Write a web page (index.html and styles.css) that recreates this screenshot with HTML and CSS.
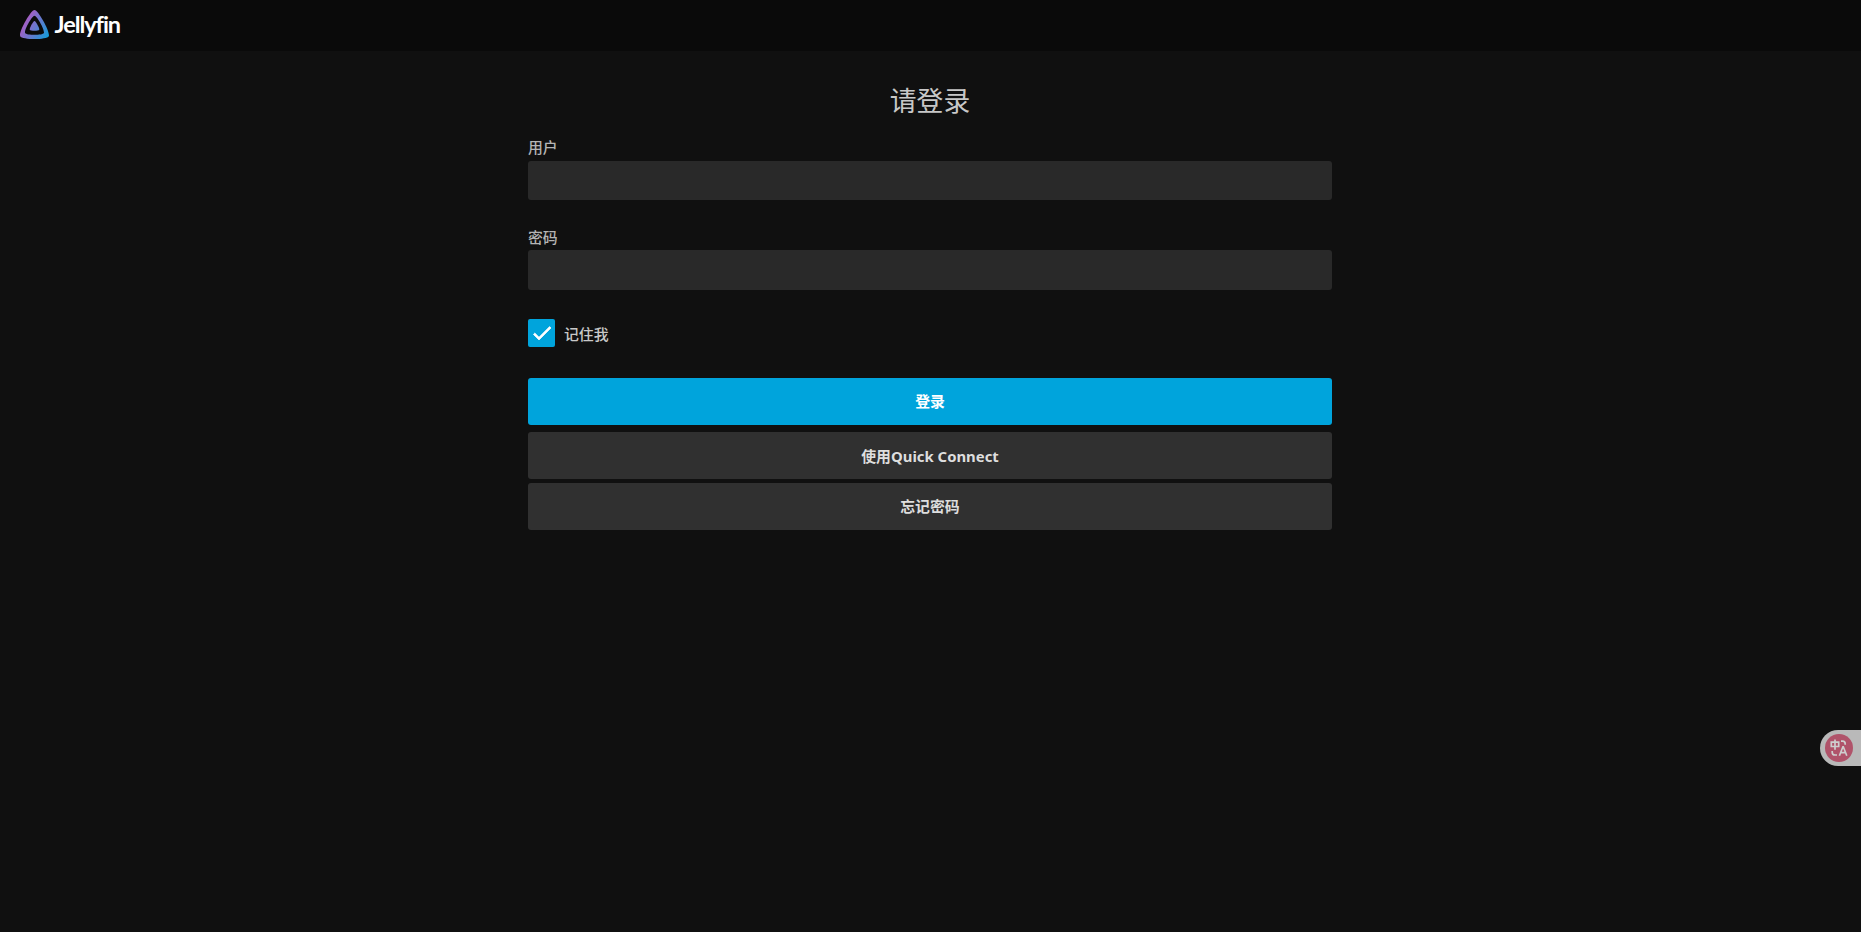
FILE: index.html
```
<!DOCTYPE html>
<html lang="zh-CN">
<head>
<meta charset="utf-8">
<title>Jellyfin</title>
<link rel="stylesheet" href="styles.css">
</head>
<body>
<header class="header">
  <svg class="logo-mark" viewBox="56 56 400 400" aria-hidden="true">
    <defs>
      <linearGradient id="brand" gradientUnits="userSpaceOnUse" x1="110.25" y1="213.3" x2="496.14" y2="436.09">
        <stop offset="0" stop-color="#aa5cc3"/>
        <stop offset="1" stop-color="#00a4dc"/>
      </linearGradient>
    </defs>
    <path fill="url(#brand)" d="M190.56 329.07c8.63 17.3 122.4 17.12 130.93 0 8.52-17.1-47.9-119.78-65.46-119.8-17.57 0-74.1 102.5-65.47 119.8z"/>
    <path fill="url(#brand)" d="M58.75 417.03c25.97 52.15 368.86 51.55 394.55 0S308.93 56.08 256.03 56.08c-52.92 0-223.25 308.8-197.28 360.95zm68.04-45.25c-17.02-34.17 94.6-236.5 129.26-236.5 34.67 0 146.1 202.7 129.26 236.5-16.83 33.8-241.5 34.17-258.52 0z"/>
  </svg>
  <span class="logo-text">Jellyfin</span>
</header>
<main class="login">
  <h1 class="title">请登录</h1>
  <form class="form">
    <label class="label" for="user">用户</label>
    <input class="input input-user" id="user" type="text">
    <label class="label label-password" for="password">密码</label>
    <input class="input input-password" id="password" type="password">
    <div class="remember">
      <span class="checkbox">
        <svg class="check" viewBox="0 0 24 24" aria-hidden="true"><path fill="#fff" stroke="#fff" stroke-width=".7" d="M9 16.17 4.83 12l-1.42 1.41L9 19 21 7l-1.41-1.41z"/></svg>
      </span>
      <span class="remember-text">记住我</span>
    </div>
    <button class="button button-submit" type="button">登录</button>
    <button class="button button-quick" type="button">使用Quick Connect</button>
    <button class="button" type="button">忘记密码</button>
  </form>
</main>
<div class="translate">
  <svg class="translate-icon" viewBox="0 0 28 28" aria-hidden="true">
    <circle cx="14" cy="14" r="14" fill="#b0536a"/>
    <g fill="none" stroke="#cecece" stroke-width="1.7">
      <path d="M6.3 8.2h7.4v4.3H6.3zM10 5.6v10.2"/>
      <path d="M16 7.2h1.6q2.6 0 2.6 2.8v.8M7.2 17v1.2q0 2.8 2.8 2.8h2"/>
      <path d="M14.4 21.7l3.5-8.9h.4l3.5 8.9M15.6 18.7h5"/>
    </g>
  </svg>
</div>
</body>
</html>
```
FILE: styles.css
```
* { box-sizing: border-box; }
body {
  margin: 0;
  height: 932px;
  overflow: hidden;
  background: #101010;
  color: #c8c8c8;
  font-family: "Noto Sans", "Noto Sans CJK SC", sans-serif;
  font-size: 14.88px;
}
.header {
  display: flex;
  height: 51px;
  padding: 10px 0 0 20px;
  background: #0a0a0a;
}
.logo-mark { width: 29px; height: 29px; }
.logo-text {
  margin-left: 5.5px;
  color: #fff;
  font: 700 23.5px/29px Lato, sans-serif;
  letter-spacing: -1.05px;
}
.login { width: 804px; margin: 0 auto; position: relative; left: -0.5px; }
.title {
  margin: 0;
  padding-top: 30px;
  font-size: 26.8px;
  font-weight: 400;
  line-height: 40px;
  text-align: center;
}
.form { display: flex; flex-direction: column; padding-top: 16px; }
.label { height: 24px; color: #b4b4b4; font-weight: 500; line-height: 20px; }
.label-password { margin-top: 26px; line-height: 22px; }
.input {
  width: 100%;
  border: 0;
  border-radius: 3px;
  background: #292929;
  color: #fff;
  font: inherit;
}
.input-user { height: 39px; }
.input-password { height: 40px; }
.remember { display: flex; height: 28px; margin: 29px 0 31px; }
.checkbox {
  display: flex;
  align-items: center;
  justify-content: center;
  width: 27px;
  height: 28px;
  border-radius: 2px;
  background: #00a4dc;
}
.check { width: 24px; height: 24px; }
.remember-text { margin-left: 9px; font-weight: 500; line-height: 30px; }
.button {
  height: 47px;
  margin: 0 0 4px;
  padding: 0;
  border: 0;
  border-radius: 3px;
  background: #303030;
  color: #dedede;
  font: inherit;
  font-weight: 700;
  line-height: 47px;
}
.button-submit { margin-bottom: 7px; background: #00a4dc; color: #fff; }
.button-quick { padding-top: 1px; }
.translate {
  position: absolute;
  top: 730px;
  right: 0;
  width: 41px;
  height: 36px;
  padding: 4px 0 0 5px;
  border-radius: 18px 0 0 18px;
  background: #b9b9b9;
}
.translate-icon { display: block; width: 28px; height: 28px; }
```
